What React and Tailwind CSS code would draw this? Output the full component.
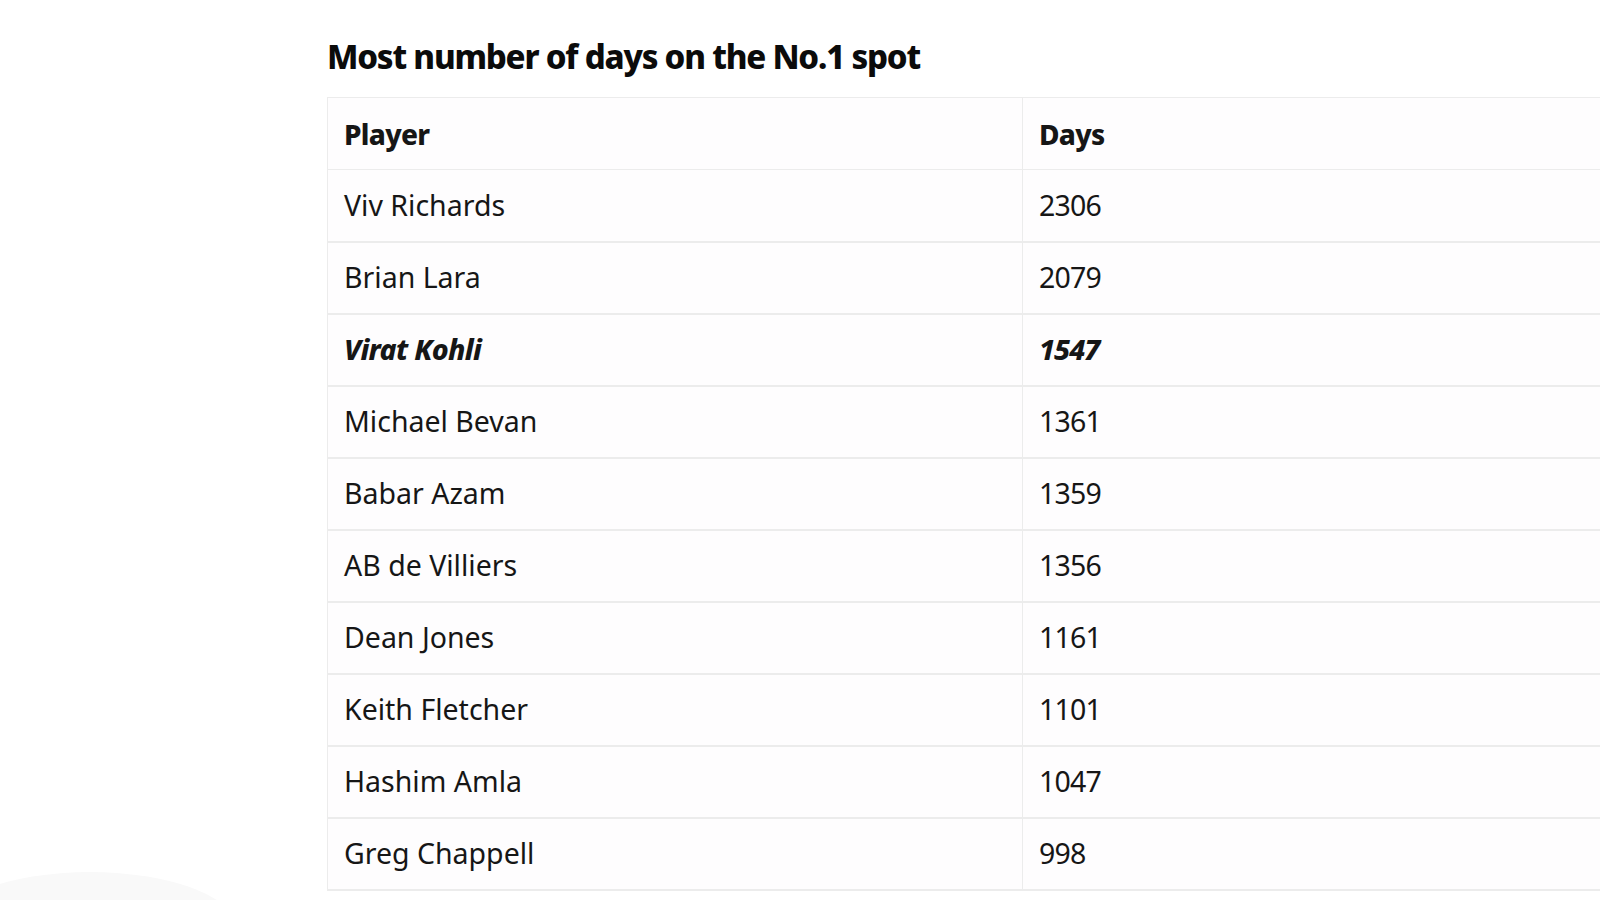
const rows = [
  { player: 'Viv Richards', days: '2306' },
  { player: 'Brian Lara', days: '2079' },
  { player: 'Virat Kohli', days: '1547', highlight: true },
  { player: 'Michael Bevan', days: '1361' },
  { player: 'Babar Azam', days: '1359' },
  { player: 'AB de Villiers', days: '1356' },
  { player: 'Dean Jones', days: '1161' },
  { player: 'Keith Fletcher', days: '1101' },
  { player: 'Hashim Amla', days: '1047' },
  { player: 'Greg Chappell', days: '998' },
];

export default function App() {
  return (
    <div className="relative w-[1600px] h-[900px] overflow-hidden bg-white font-['Noto_Sans',sans-serif] text-[#161616]">
      <div className="absolute -left-[60px] top-[872px] w-[300px] h-[120px] rounded-[50%] bg-[#f9f9f9]" />
      <div className="relative pl-[327px] pt-[37px]">
        <h2 className="text-[33px] leading-[40px] font-extrabold tracking-[-1.2px] text-[#0b0b0b]">
          Most number of days on the No.1 spot
        </h2>
        <table className="mt-[20px] w-[1400px] border-collapse bg-[#fefdfe] text-[28.5px]">
          <thead>
            <tr className="h-[72px] border-y border-[#ececec]">
              <th className="w-[695px] border-l border-r border-[#ececec] pl-[16px] text-left text-[28px] font-extrabold tracking-[-0.7px]">
                Player
              </th>
              <th className="pl-[16px] text-left text-[28px] font-extrabold tracking-[-0.7px]">Days</th>
            </tr>
          </thead>
          <tbody>
            {rows.map((r) => (
              <tr key={r.player} className="h-[72px] border-b-[2px] border-[#ececec]">
                <td
                  className={`border-l border-r border-[#ececec] pl-[16px] ${
                    r.highlight ? 'font-extrabold italic tracking-[-0.7px]' : 'font-normal'
                  }`}
                >
                  {r.player}
                </td>
                <td
                  className={`pl-[16px] ${
                    r.highlight ? 'font-extrabold italic tracking-[-1px]' : 'font-normal tracking-[-0.8px]'
                  }`}
                >
                  {r.days}
                </td>
              </tr>
            ))}
          </tbody>
        </table>
      </div>
    </div>
  );
}
